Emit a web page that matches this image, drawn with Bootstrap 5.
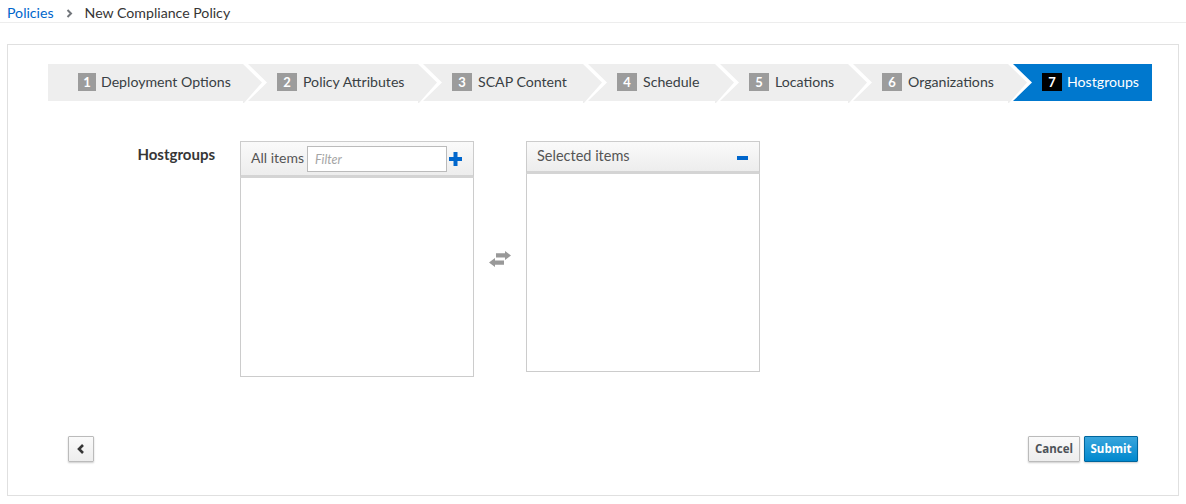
<!DOCTYPE html>
<html><head><meta charset="utf-8">
<link href="https://cdn.jsdelivr.net/npm/bootstrap@5.3.0/dist/css/bootstrap.min.css" rel="stylesheet">
<style>
html,body{height:504px;overflow:hidden;background:#fff}
body{font-family:Lato,"Open Sans",sans-serif;font-size:14.15px;color:#363636}
.crumbs{height:23px;border-bottom:1px solid #ededed;padding:4px 7px 0;line-height:18px;margin-bottom:21px;font-size:14.15px}
.crumbs a{color:#0066cc;text-decoration:none}
.crumb-sep{margin:0 12px 0 12px;width:7px;height:9px}
.panel-box{margin:0 7px;height:452px;border:1px solid #e0e0e0;padding:19px 27px 0 40px}
.wz{height:37px}
.wz-step{position:relative;height:37px;background:#eee;padding:0 0 1px 34px;flex:none;color:#393f44}
.wz-step:first-child{padding-left:30px}
.wz-step::before,.wz-step::after{content:"";position:absolute;top:0;left:100%}
.wz-step::before{width:26px;height:40px;background:#fff;clip-path:polygon(0 0,5px 0,24px 18.500px,5px 37px,2px 40px,0 40px);z-index:2}
.wz-step::after{width:19px;height:40px;background:#eee;clip-path:polygon(0 0,19px 18.5px,1px 39px,0 39px);z-index:3}
.wz-step:last-child::before,.wz-step:last-child::after{display:none}
.wz-step.on{background:#0078ce;color:#fff}
.wz-num{flex:none;display:inline-block;width:20px;height:18px;line-height:18px;margin-top:0;text-align:center;background:#9c9c9c;color:#fff;font-size:13px;font-weight:700;margin-right:6px}
.wz-step:first-child .wz-num{width:18px;margin-right:5px}
.on .wz-num{background:#000;margin-right:5px}
.field-lbl{width:167px;text-align:right;font-weight:700;font-size:15px;padding-top:4px;line-height:18px}
.dual{width:234px}
.dual-head{height:33px;border:1px solid #ccc;border-bottom:3px solid #d4d4d4;background:linear-gradient(#fafafa,#ededed);color:#555;padding:0 10px 2px;display:flex;align-items:center}
.sel-txt{font-size:14.5px}
.dual-body{border:1px solid #ccc;border-top:0;background:#fff}
.filter-inp{width:140px;height:26px;border:1px solid #bbb;background:#fff;margin:2px 2px 0 3px;padding-left:7px;font-size:12.5px;font-style:italic;color:#a5a5a5;line-height:25px}
.mid-col{width:52px}
.btn-lite,.btn-go{font-family:"Open Sans",sans-serif;height:26px;box-shadow:0 1px 2px rgba(0,0,0,.2);font-size:11.5px;font-weight:700;padding:0;border-radius:1px}
.btn-lite{border:1px solid #bbb;background:linear-gradient(#fafafa,#ededed);color:#4d5258}
.btn-go{border:1px solid #00659c;background:linear-gradient(#39a5dc,#0088ce);color:#fff;width:54px}
.pad-r3{padding-right:3px;height:37px;font-size:14px}
.pad-r11{padding-right:11px}
.h199{height:199px}.h198{height:198px}
.minus-ic{margin-top:5px}
.plus-ic{margin-top:2px}
.form-row{margin-top:40px;height:236px}
.dual-a{margin-left:25px}
.foot-row{margin:59px 13px 0 20px}
.w26{width:26px}.w52{width:52px}
</style></head><body>
<div class="crumbs d-flex align-items-center"><a href="#">Policies</a><svg class="crumb-sep" viewBox="0 0 7 9"><path d="M1.5 1l3.500 3.500L1.500 8" fill="none" stroke="#72767b" stroke-width="2"/></svg><span>New Compliance Policy</span></div>
<div class="panel-box">
 <div class="wz d-flex">
  <div class="wz-step d-flex align-items-center" style="width:195px"><span class="wz-num">1</span>Deployment Options</div>
  <div class="wz-step d-flex align-items-center" style="width:175px"><span class="wz-num">2</span>Policy Attributes</div>
  <div class="wz-step d-flex align-items-center" style="width:165px"><span class="wz-num">3</span>SCAP Content</div>
  <div class="wz-step d-flex align-items-center" style="width:132px"><span class="wz-num">4</span>Schedule</div>
  <div class="wz-step d-flex align-items-center" style="width:133px"><span class="wz-num">5</span>Locations</div>
  <div class="wz-step d-flex align-items-center" style="width:160px"><span class="wz-num">6</span>Organizations</div>
  <div class="wz-step on d-flex align-items-center" style="width:144px"><span class="wz-num">7</span>Hostgroups</div>
 </div>
 <div class="d-flex form-row">
  <div class="field-lbl">Hostgroups</div>
  <div class="dual dual-a d-flex flex-column">
   <div class="dual-head pad-r3"><span>All items</span><div class="filter-inp">Filter</div><svg class="plus-ic" width="13" height="14" viewBox="0 0 13 14"><path d="M4.500 0h4v5H13v4H8.500v5h-4V9H0V5h4.500z" fill="#0066cc"/></svg></div>
   <div class="dual-body h199"></div>
  </div>
  <div class="mid-col d-flex align-items-center justify-content-center"><svg width="22" height="16" viewBox="0 0 22 16"><path d="M7 2.200h9V0l6 4.500L16 9V6.500H7zM15 9.500H6V7L0 11.500 6 16v-2.200h9z" fill="#999"/></svg></div>
  <div class="dual d-flex flex-column">
   <div class="dual-head justify-content-between pad-r11"><span class="sel-txt">Selected items</span><svg class="minus-ic" width="11" height="4" viewBox="0 0 11 4"><rect width="11" height="4" fill="#0066cc"/></svg></div>
   <div class="dual-body h198"></div>
  </div>
 </div>
 <div class="d-flex justify-content-between align-items-center foot-row">
  <button class="btn btn-lite w26 d-flex align-items-center justify-content-center"><svg width="8" height="10" viewBox="0 0 8 10"><path d="M6 1L2 5l4 4" fill="none" stroke="#363636" stroke-width="2.6"/></svg></button>
  <div class="d-flex gap-1"><button class="btn btn-lite w52">Cancel</button><button class="btn btn-go">Submit</button></div>
 </div>
</div>
</body></html>
